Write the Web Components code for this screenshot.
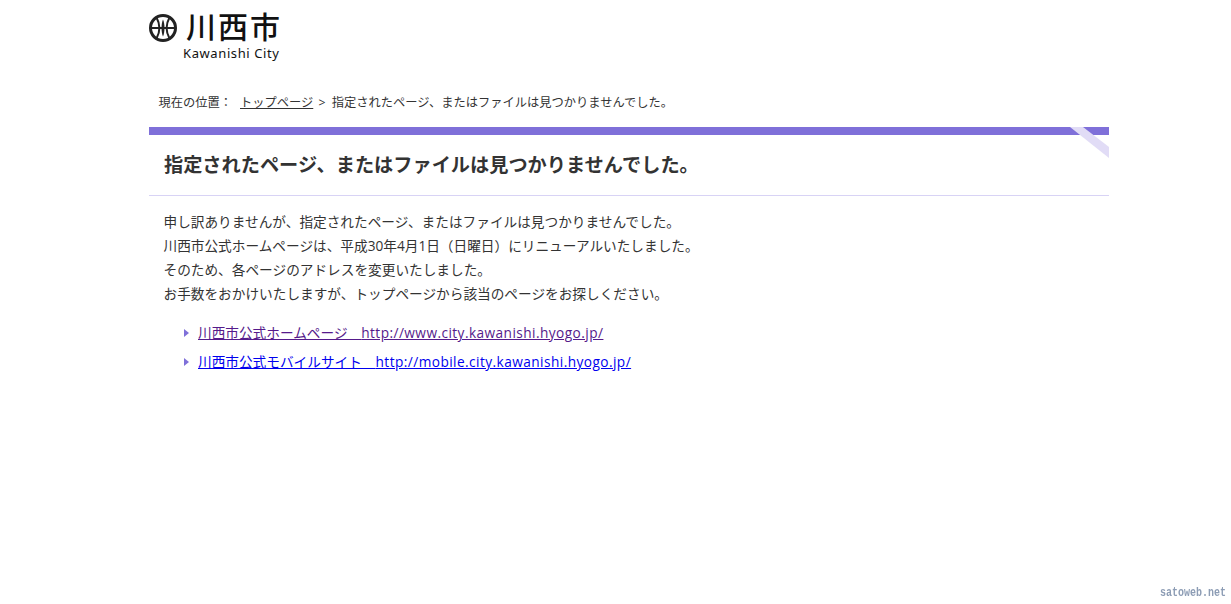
<!DOCTYPE html>
<html lang="ja">
<head>
<meta charset="utf-8">
<title>川西市</title>
<style>
    html, body { margin: 0; padding: 0; background: #fff; }
    body {
        font-family: "Open Sans", "Noto Sans CJK JP", sans-serif;
        font-size: 13.66px;
        color: #333;
    }
    .url { letter-spacing: .44px; }
</style>
</head>
<body>
<error-page>
    <site-logo slot="logo"></site-logo>
    <bread-crumb slot="crumb" current="指定されたページ、またはファイルは見つかりませんでした。"></bread-crumb>
    <page-title slot="title">指定されたページ、またはファイルは見つかりませんでした。</page-title>
    <p>申し訳ありませんが、指定されたページ、またはファイルは見つかりませんでした。</p>
    <p>川西市公式ホームページは、平成30年4月1日（日曜日）にリニューアルいたしました。</p>
    <p>そのため、各ページのアドレスを変更いたしました。</p>
    <p>お手数をおかけいたしますが、トップページから該当のページをお探しください。</p>
    <link-list slot="links">
        <link-item href="#top" visited>川西市公式ホームページ　<span class="url">http://www.city.kawanishi.hyogo.jp/</span></link-item>
        <link-item href="#mobile">川西市公式モバイルサイト　<span class="url">http://mobile.city.kawanishi.hyogo.jp/</span></link-item>
    </link-list>
</error-page>
<site-mark>satoweb.net</site-mark>

<script>
class ErrorPage extends HTMLElement {
    constructor() {
        super();
        this.attachShadow({ mode: 'open' });
        this.shadowRoot.innerHTML = `
            <style>
                :host { display: block; width: 960px; margin-left: 149px; }
                .body { padding: 14px 15px 0 14.5px; }
                ::slotted(p) { margin: 0; line-height: 24px; }
            </style>
            <slot name="logo"></slot>
            <slot name="crumb"></slot>
            <slot name="title"></slot>
            <div class="body">
                <slot></slot>
                <slot name="links"></slot>
            </div>
        `;
    }
}

class SiteLogo extends HTMLElement {
    constructor() {
        super();
        this.attachShadow({ mode: 'open' });
        this.shadowRoot.innerHTML = `
            <style>
                :host { display: block; height: 91px; padding-top: 10px; box-sizing: border-box; color: #111; }
                .top { display: flex; align-items: center; gap: 9px; height: 35px; }
                svg { width: 28px; height: 28px; display: block; margin-top: 1px; }
                .name { font-size: 30px; line-height: 35px; letter-spacing: 2px; font-weight: 500; font-family: "Liberation Sans", "Noto Sans CJK JP", sans-serif; }
                .en { font-size: 13px; line-height: 18px; margin: -1px 0 0 34px; letter-spacing: .6px; font-family: "Noto Sans", sans-serif; }
            </style>
            <div class="top">
                <svg viewBox="0 0 28 28">
                    <circle cx="14" cy="14" r="12.5" fill="#fff" stroke="#222" stroke-width="3"/>
                    <path d="M2 14h24" stroke="#222" stroke-width="2"/>
                    <path d="M14 5.5c2 4.5 2 12.500 0 17c-2-4.500-2-12.500 0-17z" fill="#222"/>
                    <path d="M7.500 3.500c3.600 6.500 3.600 14.500 0 21M20.500 3.500c-3.600 6.500-3.600 14.500 0 21" fill="none" stroke="#222" stroke-width="2"/>
                </svg>
                <span class="name">川西市</span>
            </div>
            <div class="en">Kawanishi City</div>
        `;
    }
}

class BreadCrumb extends HTMLElement {
    constructor() {
        super();
        this.attachShadow({ mode: 'open' });
    }

    connectedCallback() {
        this.shadowRoot.innerHTML = `
            <style>
                :host { display: block; height: 36px; padding: 1px 0 0 9.5px; font-size: 12.26px; line-height: 22px; box-sizing: border-box; }
                a { color: #333; margin: 0 2px 0 8px; }
                .sep { margin-right: 3px; }
            </style>
            現在の位置：<a href="#top">トップページ</a> <span class="sep">&gt;</span> ${this.getAttribute('current')}
        `;
    }
}

class PageTitle extends HTMLElement {
    constructor() {
        super();
        this.attachShadow({ mode: 'open' });
        this.shadowRoot.innerHTML = `
            <style>
                :host { display: block; position: relative; height: 69px; border-top: 8px solid #7f70d9; border-bottom: 1px solid #d8d3f5; box-sizing: border-box; }
                h1 { margin: 0; padding: 16px 15px 0; font-size: 19.2px; line-height: 28px; font-weight: 700; color: #333; }
                svg { position: absolute; right: 0; top: -8px; width: 40px; height: 32px; }
            </style>
            <h1><slot></slot></h1>
            <svg viewBox="0 0 40 32"><path d="M1 0H14L40 20V31Z" fill="#e1dcf6"/></svg>
        `;
    }
}

class LinkList extends HTMLElement {
    constructor() {
        super();
        this.attachShadow({ mode: 'open' });
        this.shadowRoot.innerHTML = `
            <style>
                :host { display: flex; flex-direction: column; gap: 5px; margin-top: 15px; padding-left: 20.5px; }
            </style>
            <slot></slot>
        `;
    }
}

class LinkItem extends HTMLElement {
    constructor() {
        super();
        this.attachShadow({ mode: 'open' });
    }

    connectedCallback() {
        const color = this.hasAttribute('visited') ? '#551a8b' : '#0000ee';
        this.shadowRoot.innerHTML = `
            <style>
                :host { display: flex; align-items: center; gap: 9px; height: 24px; }
                i { width: 0; height: 0; border-left: 5px solid #7f70d9; border-top: 4px solid transparent; border-bottom: 4px solid transparent; }
                a { color: ${color}; line-height: 24px; }
            </style>
            <i></i><a href="${this.getAttribute('href')}"><slot></slot></a>
        `;
    }
}

class SiteMark extends HTMLElement {
    constructor() {
        super();
        this.attachShadow({ mode: 'open' });
        this.shadowRoot.innerHTML = `
            <style>
                :host { position: fixed; right: 5px; bottom: 4px; font: 700 10px/14px "Liberation Mono", monospace; color: #8d9db5; transform: scaleY(1.25); }
            </style>
            <slot></slot>
        `;
    }
}

customElements.define('error-page', ErrorPage);
customElements.define('site-logo', SiteLogo);
customElements.define('bread-crumb', BreadCrumb);
customElements.define('page-title', PageTitle);
customElements.define('link-list', LinkList);
customElements.define('link-item', LinkItem);
customElements.define('site-mark', SiteMark);
</script>
</body>
</html>
